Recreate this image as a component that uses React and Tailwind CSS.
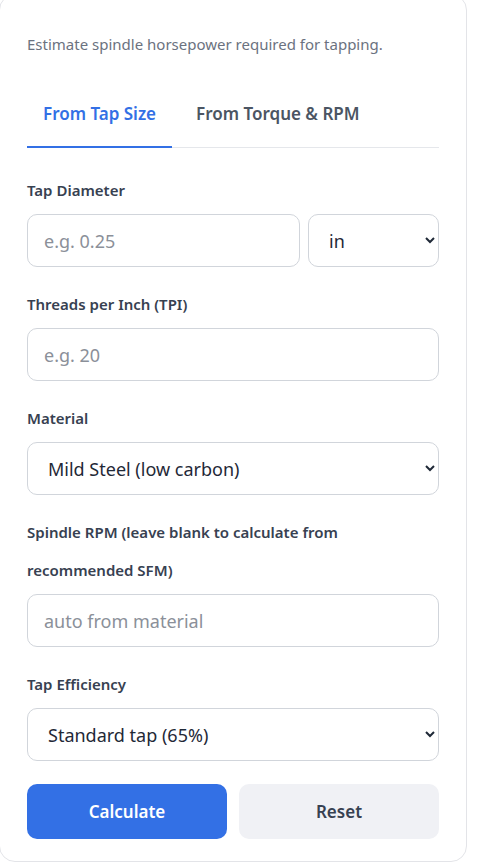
import React, { useState } from 'react';

const font = { fontFamily: '"Noto Sans", "Open Sans", sans-serif' };

const Field = ({ label, children }) => (
  <div className="mb-[18px]">
    <label className="block text-[15px] font-semibold text-[#374151] leading-[38px] mb-[5px]">{label}</label>
    {children}
  </div>
);

const inputCls =
  'w-full h-[53px] rounded-[10px] border border-[#d1d5db] bg-white px-4 text-[18px] text-[#1f2937] placeholder:text-[#8b9099] outline-none';
const selectCls =
  'w-full h-[53px] rounded-[10px] border border-[#d1d5db] bg-white pl-4 pr-1 text-[18px] text-[#1f2937] outline-none';

export default function App() {
  const [tab, setTab] = useState('size');
  const [diameter, setDiameter] = useState('');
  const [unit, setUnit] = useState('in');
  const [tpi, setTpi] = useState('');
  const [material, setMaterial] = useState('mild');
  const [rpm, setRpm] = useState('');
  const [eff, setEff] = useState('65');

  const reset = () => {
    setDiameter('');
    setUnit('in');
    setTpi('');
    setMaterial('mild');
    setRpm('');
    setEff('65');
  };

  return (
    <div className="min-h-screen bg-white overflow-hidden" style={font}>
      <div className="w-[468px] -mt-[6px] -ml-px rounded-2xl border border-[#e3e4e8] bg-white px-[27px] pt-[39px] pb-[22px]">
        <p className="text-[15px] leading-5 text-[#6b7280] mb-[28px]">Estimate spindle horsepower required for tapping.</p>

        <div className="flex gap-2 border-b border-[#e5e7eb] mb-[23px]">
          <button
            type="button"
            onClick={() => setTab('size')}
            className={`-mb-px px-4 pt-5 pb-5 text-[17px] leading-6 font-semibold border-b-2 ${tab === 'size' ? 'text-[#3370e5] border-[#3370e5]' : 'text-[#4b5563] border-transparent'}`}
          >
            From Tap Size
          </button>
          <button
            type="button"
            onClick={() => setTab('torque')}
            className={`-mb-px px-4 pt-5 pb-5 text-[17px] leading-6 font-semibold border-b-2 ${tab === 'torque' ? 'text-[#3370e5] border-[#3370e5]' : 'text-[#4b5563] border-transparent'}`}
          >
            From Torque &amp; RPM
          </button>
        </div>

        <Field label="Tap Diameter">
          <div className="flex gap-2">
            <input
              type="text"
              value={diameter}
              onChange={(e) => setDiameter(e.target.value)}
              placeholder="e.g. 0.25"
              className={`${inputCls} flex-1`}
            />
            <select value={unit} onChange={(e) => setUnit(e.target.value)} className={`${selectCls} !w-[131px]`}>
              <option value="in">in</option>
              <option value="mm">mm</option>
            </select>
          </div>
        </Field>

        <Field label="Threads per Inch (TPI)">
          <input type="text" value={tpi} onChange={(e) => setTpi(e.target.value)} placeholder="e.g. 20" className={inputCls} />
        </Field>

        <Field label="Material">
          <select value={material} onChange={(e) => setMaterial(e.target.value)} className={selectCls}>
            <option value="mild">Mild Steel (low carbon)</option>
            <option value="alloy">Alloy Steel</option>
            <option value="stainless">Stainless Steel</option>
            <option value="aluminum">Aluminum</option>
            <option value="brass">Brass</option>
            <option value="castiron">Cast Iron</option>
          </select>
        </Field>

        <Field label="Spindle RPM (leave blank to calculate from recommended SFM)">
          <input type="text" value={rpm} onChange={(e) => setRpm(e.target.value)} placeholder="auto from material" className={inputCls} />
        </Field>

        <Field label="Tap Efficiency">
          <select value={eff} onChange={(e) => setEff(e.target.value)} className={selectCls}>
            <option value="65">Standard tap (65%)</option>
            <option value="75">Spiral point (75%)</option>
            <option value="55">Form tap (55%)</option>
          </select>
        </Field>

        <div className="flex gap-3 mt-[23px]">
          <button type="button" className="w-[200px] h-[55px] rounded-[10px] bg-[#3370e5] text-white text-[17px] font-semibold">
            Calculate
          </button>
          <button type="button" onClick={reset} className="flex-1 h-[55px] rounded-[10px] bg-[#f0f1f5] text-[#374151] text-[17px] font-semibold">
            Reset
          </button>
        </div>
      </div>
    </div>
  );
}
